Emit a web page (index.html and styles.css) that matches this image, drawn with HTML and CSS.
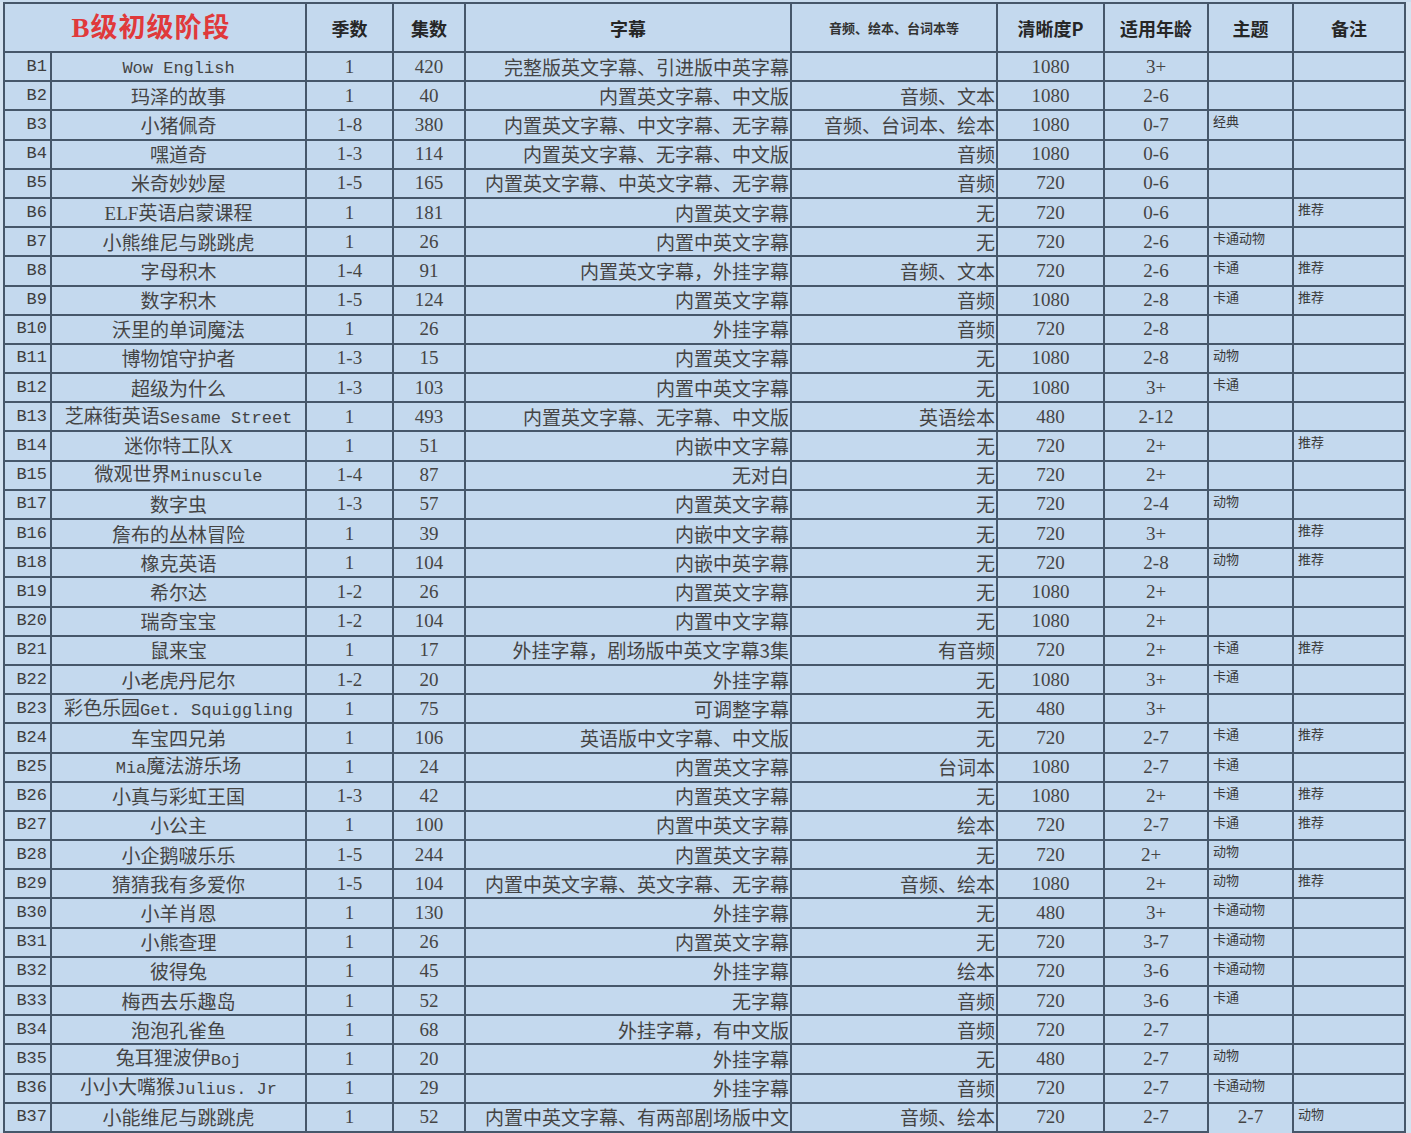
FILE: index.html
```html
<!DOCTYPE html>
<html lang="zh-CN">
<head>
<meta charset="utf-8">
<title>B级初级阶段</title>
<link rel="stylesheet" href="styles.css">
</head>
<body>
<div class="strip"></div>
<div class="wrap">
<table class="sheet">
<colgroup>
<col class="c1"><col class="c2"><col class="c3"><col class="c4"><col class="c5"><col class="c6"><col class="c7"><col class="c8"><col class="c9"><col class="c10">
</colgroup>
<thead>
<tr class="head">
<th colspan="2" class="title">B级初级阶段</th>
<th>季数</th><th>集数</th><th>字幕</th><th class="small">音频、绘本、台词本等</th><th>清晰度P</th><th>适用年龄</th><th>主题</th><th>备注</th>
</tr>
</thead>
<tbody>
<tr><td class="no">B1</td><td class="nm"><span class="lt">Wow English</span></td><td class="n">1</td><td class="n">420</td><td class="sub">完整版英文字幕、引进版中英字幕</td><td class="au"></td><td class="n">1080</td><td class="n">3+</td><td class="tg"></td><td class="tg"></td></tr>
<tr><td class="no">B2</td><td class="nm">玛泽的故事</td><td class="n">1</td><td class="n">40</td><td class="sub">内置英文字幕、中文版</td><td class="au">音频、文本</td><td class="n">1080</td><td class="n">2-6</td><td class="tg"></td><td class="tg"></td></tr>
<tr><td class="no">B3</td><td class="nm">小猪佩奇</td><td class="n">1-8</td><td class="n">380</td><td class="sub">内置英文字幕、中文字幕、无字幕</td><td class="au">音频、台词本、绘本</td><td class="n">1080</td><td class="n">0-7</td><td class="tg">经典</td><td class="tg"></td></tr>
<tr><td class="no">B4</td><td class="nm">嘿道奇</td><td class="n">1-3</td><td class="n">114</td><td class="sub">内置英文字幕、无字幕、中文版</td><td class="au">音频</td><td class="n">1080</td><td class="n">0-6</td><td class="tg"></td><td class="tg"></td></tr>
<tr><td class="no">B5</td><td class="nm">米奇妙妙屋</td><td class="n">1-5</td><td class="n">165</td><td class="sub">内置英文字幕、中英文字幕、无字幕</td><td class="au">音频</td><td class="n">720</td><td class="n">0-6</td><td class="tg"></td><td class="tg"></td></tr>
<tr><td class="no">B6</td><td class="nm"><span class="ls">ELF</span>英语启蒙课程</td><td class="n">1</td><td class="n">181</td><td class="sub">内置英文字幕</td><td class="au">无</td><td class="n">720</td><td class="n">0-6</td><td class="tg"></td><td class="tg">推荐</td></tr>
<tr><td class="no">B7</td><td class="nm">小熊维尼与跳跳虎</td><td class="n">1</td><td class="n">26</td><td class="sub">内置中英文字幕</td><td class="au">无</td><td class="n">720</td><td class="n">2-6</td><td class="tg">卡通动物</td><td class="tg"></td></tr>
<tr><td class="no">B8</td><td class="nm">字母积木</td><td class="n">1-4</td><td class="n">91</td><td class="sub">内置英文字幕，外挂字幕</td><td class="au">音频、文本</td><td class="n">720</td><td class="n">2-6</td><td class="tg">卡通</td><td class="tg">推荐</td></tr>
<tr><td class="no">B9</td><td class="nm">数字积木</td><td class="n">1-5</td><td class="n">124</td><td class="sub">内置英文字幕</td><td class="au">音频</td><td class="n">1080</td><td class="n">2-8</td><td class="tg">卡通</td><td class="tg">推荐</td></tr>
<tr><td class="no">B10</td><td class="nm">沃里的单词魔法</td><td class="n">1</td><td class="n">26</td><td class="sub">外挂字幕</td><td class="au">音频</td><td class="n">720</td><td class="n">2-8</td><td class="tg"></td><td class="tg"></td></tr>
<tr><td class="no">B11</td><td class="nm">博物馆守护者</td><td class="n">1-3</td><td class="n">15</td><td class="sub">内置英文字幕</td><td class="au">无</td><td class="n">1080</td><td class="n">2-8</td><td class="tg">动物</td><td class="tg"></td></tr>
<tr><td class="no">B12</td><td class="nm">超级为什么</td><td class="n">1-3</td><td class="n">103</td><td class="sub">内置中英文字幕</td><td class="au">无</td><td class="n">1080</td><td class="n">3+</td><td class="tg">卡通</td><td class="tg"></td></tr>
<tr><td class="no">B13</td><td class="nm">芝麻街英语<span class="lt">Sesame Street</span></td><td class="n">1</td><td class="n">493</td><td class="sub">内置英文字幕、无字幕、中文版</td><td class="au">英语绘本</td><td class="n">480</td><td class="n">2-12</td><td class="tg"></td><td class="tg"></td></tr>
<tr><td class="no">B14</td><td class="nm">迷你特工队<span class="ls">X</span></td><td class="n">1</td><td class="n">51</td><td class="sub">内嵌中文字幕</td><td class="au">无</td><td class="n">720</td><td class="n">2+</td><td class="tg"></td><td class="tg">推荐</td></tr>
<tr><td class="no">B15</td><td class="nm">微观世界<span class="lt">Minuscule</span></td><td class="n">1-4</td><td class="n">87</td><td class="sub">无对白</td><td class="au">无</td><td class="n">720</td><td class="n">2+</td><td class="tg"></td><td class="tg"></td></tr>
<tr><td class="no">B17</td><td class="nm">数字虫</td><td class="n">1-3</td><td class="n">57</td><td class="sub">内置英文字幕</td><td class="au">无</td><td class="n">720</td><td class="n">2-4</td><td class="tg">动物</td><td class="tg"></td></tr>
<tr><td class="no">B16</td><td class="nm">詹布的丛林冒险</td><td class="n">1</td><td class="n">39</td><td class="sub">内嵌中文字幕</td><td class="au">无</td><td class="n">720</td><td class="n">3+</td><td class="tg"></td><td class="tg">推荐</td></tr>
<tr><td class="no">B18</td><td class="nm">橡克英语</td><td class="n">1</td><td class="n">104</td><td class="sub">内嵌中英字幕</td><td class="au">无</td><td class="n">720</td><td class="n">2-8</td><td class="tg">动物</td><td class="tg">推荐</td></tr>
<tr><td class="no">B19</td><td class="nm">希尔达</td><td class="n">1-2</td><td class="n">26</td><td class="sub">内置英文字幕</td><td class="au">无</td><td class="n">1080</td><td class="n">2+</td><td class="tg"></td><td class="tg"></td></tr>
<tr><td class="no">B20</td><td class="nm">瑞奇宝宝</td><td class="n">1-2</td><td class="n">104</td><td class="sub">内置中文字幕</td><td class="au">无</td><td class="n">1080</td><td class="n">2+</td><td class="tg"></td><td class="tg"></td></tr>
<tr><td class="no">B21</td><td class="nm">鼠来宝</td><td class="n">1</td><td class="n">17</td><td class="sub">外挂字幕，剧场版中英文字幕3集</td><td class="au">有音频</td><td class="n">720</td><td class="n">2+</td><td class="tg">卡通</td><td class="tg">推荐</td></tr>
<tr><td class="no">B22</td><td class="nm">小老虎丹尼尔</td><td class="n">1-2</td><td class="n">20</td><td class="sub">外挂字幕</td><td class="au">无</td><td class="n">1080</td><td class="n">3+</td><td class="tg">卡通</td><td class="tg"></td></tr>
<tr><td class="no">B23</td><td class="nm">彩色乐园<span class="lt">Get. Squiggling</span></td><td class="n">1</td><td class="n">75</td><td class="sub">可调整字幕</td><td class="au">无</td><td class="n">480</td><td class="n">3+</td><td class="tg"></td><td class="tg"></td></tr>
<tr><td class="no">B24</td><td class="nm">车宝四兄弟</td><td class="n">1</td><td class="n">106</td><td class="sub">英语版中文字幕、中文版</td><td class="au">无</td><td class="n">720</td><td class="n">2-7</td><td class="tg">卡通</td><td class="tg">推荐</td></tr>
<tr><td class="no">B25</td><td class="nm"><span class="lt">Mia</span>魔法游乐场</td><td class="n">1</td><td class="n">24</td><td class="sub">内置英文字幕</td><td class="au">台词本</td><td class="n">1080</td><td class="n">2-7</td><td class="tg">卡通</td><td class="tg"></td></tr>
<tr><td class="no">B26</td><td class="nm">小真与彩虹王国</td><td class="n">1-3</td><td class="n">42</td><td class="sub">内置英文字幕</td><td class="au">无</td><td class="n">1080</td><td class="n">2+</td><td class="tg">卡通</td><td class="tg">推荐</td></tr>
<tr><td class="no">B27</td><td class="nm">小公主</td><td class="n">1</td><td class="n">100</td><td class="sub">内置中英文字幕</td><td class="au">绘本</td><td class="n">720</td><td class="n">2-7</td><td class="tg">卡通</td><td class="tg">推荐</td></tr>
<tr><td class="no">B28</td><td class="nm">小企鹅啵乐乐</td><td class="n">1-5</td><td class="n">244</td><td class="sub">内置英文字幕</td><td class="au">无</td><td class="n">720</td><td class="n off">2+</td><td class="tg">动物</td><td class="tg"></td></tr>
<tr><td class="no">B29</td><td class="nm">猜猜我有多爱你</td><td class="n">1-5</td><td class="n">104</td><td class="sub">内置中英文字幕、英文字幕、无字幕</td><td class="au">音频、绘本</td><td class="n">1080</td><td class="n">2+</td><td class="tg">动物</td><td class="tg">推荐</td></tr>
<tr><td class="no">B30</td><td class="nm">小羊肖恩</td><td class="n">1</td><td class="n">130</td><td class="sub">外挂字幕</td><td class="au">无</td><td class="n">480</td><td class="n">3+</td><td class="tg">卡通动物</td><td class="tg"></td></tr>
<tr><td class="no">B31</td><td class="nm">小熊查理</td><td class="n">1</td><td class="n">26</td><td class="sub">内置英文字幕</td><td class="au">无</td><td class="n">720</td><td class="n">3-7</td><td class="tg">卡通动物</td><td class="tg"></td></tr>
<tr><td class="no">B32</td><td class="nm">彼得兔</td><td class="n">1</td><td class="n">45</td><td class="sub">外挂字幕</td><td class="au">绘本</td><td class="n">720</td><td class="n">3-6</td><td class="tg">卡通动物</td><td class="tg"></td></tr>
<tr><td class="no">B33</td><td class="nm">梅西去乐趣岛</td><td class="n">1</td><td class="n">52</td><td class="sub">无字幕</td><td class="au">音频</td><td class="n">720</td><td class="n">3-6</td><td class="tg">卡通</td><td class="tg"></td></tr>
<tr><td class="no">B34</td><td class="nm">泡泡孔雀鱼</td><td class="n">1</td><td class="n">68</td><td class="sub">外挂字幕，有中文版</td><td class="au">音频</td><td class="n">720</td><td class="n">2-7</td><td class="tg"></td><td class="tg"></td></tr>
<tr><td class="no">B35</td><td class="nm">兔耳狸波伊<span class="lt">Boj</span></td><td class="n">1</td><td class="n">20</td><td class="sub">外挂字幕</td><td class="au">无</td><td class="n">480</td><td class="n">2-7</td><td class="tg">动物</td><td class="tg"></td></tr>
<tr><td class="no">B36</td><td class="nm">小小大嘴猴<span class="lt">Julius. Jr</span></td><td class="n">1</td><td class="n">29</td><td class="sub">外挂字幕</td><td class="au">音频</td><td class="n">720</td><td class="n">2-7</td><td class="tg">卡通动物</td><td class="tg"></td></tr>
<tr class="last"><td class="no">B37</td><td class="nm">小能维尼与跳跳虎</td><td class="n">1</td><td class="n">52</td><td class="sub">内置中英文字幕、有两部剧场版中文</td><td class="au">音频、绘本</td><td class="n">720</td><td class="n">2-7</td><td class="n shift">2-7</td><td class="tg">动物</td></tr>
</tbody>
</table>
</div>
</body>
</html>
```

FILE: styles.css
```css
html, body {
  margin: 0;
  padding: 0;
  background: #d4e3f1;
}

.strip {
  height: 2px;
  background: #c9dcee;
}

.wrap {
  padding-left: 3px;
}

.sheet {
  border-collapse: collapse;
  table-layout: fixed;
  width: 1403px;
  background: #c4d9ee;
  color: #444;
  font-family: "Noto Sans CJK SC", "Liberation Serif", sans-serif;
  font-size: 19px;
}

.c1 { width: 47px; }
.c2 { width: 255px; }
.c3 { width: 87px; }
.c4 { width: 72px; }
.c5 { width: 326px; }
.c6 { width: 206px; }
.c7 { width: 107px; }
.c8 { width: 104px; }
.c9 { width: 85px; }
.c10 { width: 112px; }

.sheet th,
.sheet td {
  border: 2px solid #46576a;
  padding: 0;
  overflow: hidden;
  white-space: nowrap;
  line-height: 22px;
}

.head {
  height: 49px;
}

.head th {
  font-weight: 700;
  font-size: 18px;
  color: #262626;
  text-align: center;
  vertical-align: middle;
}

.head th.title {
  color: #e0393b;
  font-size: 27px;
  font-family: "Liberation Serif", "Noto Sans CJK SC", serif;
  letter-spacing: 1px;
  padding-right: 8px;
}

.head th.small {
  font-size: 13px;
  font-weight: 700;
  color: #333;
}

.sheet tbody tr {
  height: 29.2px;
}

.sheet td {
  vertical-align: middle;
}

td.no {
  text-align: right;
  padding-right: 3px;
  font-family: "Liberation Mono", monospace;
  font-size: 17px;
  color: #3e3e3e;
}

td.nm {
  text-align: center;
}

.lt {
  font-family: "Liberation Mono", monospace;
  font-size: 17px;
}

.ls {
  font-family: "Liberation Serif", serif;
  font-size: 19px;
}

td.n {
  text-align: center;
  font-family: "Liberation Serif", "Noto Sans CJK SC", serif;
  font-size: 19px;
}

td.n.off {
  text-align: left;
  padding-left: 36px;
}

td.sub,
td.au {
  text-align: right;
  padding-right: 1px;
}

td.tg {
  vertical-align: top;
  text-align: left;
  font-size: 13px;
  line-height: 16px;
  padding: 2px 0 0 4px;
  color: #383838;
}

tr.last td.shift {
  border-left-color: transparent;
  border-bottom-color: transparent;
}
```
